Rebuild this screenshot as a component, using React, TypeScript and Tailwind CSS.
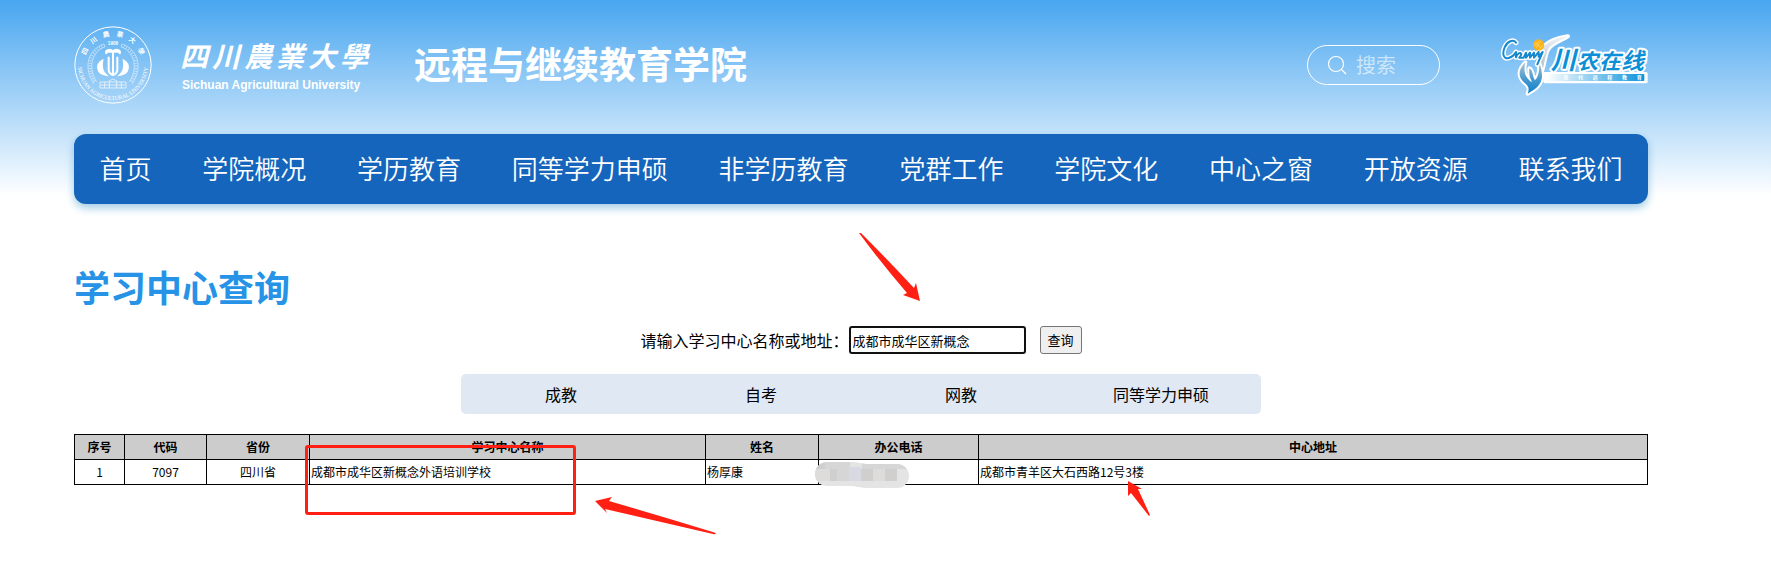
import { useState } from 'react'

const navItems = [
  '首页',
  '学院概况',
  '学历教育',
  '同等学力申硕',
  '非学历教育',
  '党群工作',
  '学院文化',
  '中心之窗',
  '开放资源',
  '联系我们'
]

const tabs = ['成教', '自考', '网教', '同等学力申硕']

const columns = [
  { title: '序号', width: 'w-[50px]' },
  { title: '代码', width: 'w-[82px]' },
  { title: '省份', width: 'w-[103px]' },
  { title: '学习中心名称', width: 'w-[396px]' },
  { title: '姓名', width: 'w-[113px]' },
  { title: '办公电话', width: 'w-[160px]' },
  { title: '中心地址', width: '' }
]

// 校徽外圈的字和各自的旋转角度
const ringChars = [
  { char: '四', angle: -64 },
  { char: '川', angle: -38 },
  { char: '農', angle: -13 },
  { char: '業', angle: 13 },
  { char: '大', angle: 38 },
  { char: '學', angle: 64 }
]

interface Center {
  id: number
  code: string
  province: string
  name: string
  contact: string
  address: string
}

const centers: Center[] = [
  {
    id: 1,
    code: '7097',
    province: '四川省',
    name: '成都市成华区新概念外语培训学校',
    contact: '杨厚康',
    address: '成都市青羊区大石西路12号3楼'
  }
]

function Emblem() {
  return (
    <svg className="size-[78px] shrink-0" viewBox="0 0 234 234" fill="none" stroke="#fff">
      <defs>
        <path id="ring-bottom" d="M15 92A105 105 0 1 0 219 92" />
      </defs>
      <circle cx="117" cy="117" r="114.500" strokeWidth="3" />
      <g
        fill="#fff"
        stroke="none"
        fontSize="20"
        fontWeight="700"
        textAnchor="middle"
        className="font-['Noto_Sans_CJK_TC',sans-serif]"
      >
        {ringChars.map(({ char, angle }) => (
          <text key={char} x="117" y="30" transform={`rotate(${angle} 117 117)`}>
            {char}
          </text>
        ))}
      </g>
      <text
        x="117"
        y="57"
        fill="#fff"
        stroke="none"
        fontSize="14"
        fontWeight="700"
        textAnchor="middle"
        className="font-['Liberation_Sans',sans-serif]"
      >
        1906
      </text>
      <text
        fill="#fff"
        stroke="none"
        fontSize="17"
        textAnchor="middle"
        className="font-['Liberation_Serif',serif]"
      >
        <textPath href="#ring-bottom" startOffset="50%">SICHUAN AGRICULTURAL UNIVERSITY</textPath>
      </text>
      <g strokeWidth="2" opacity=".75">
        <path d="M90 54C42 70 26 124 60 174M144 54c48 16 64 70 30 120" />
        <path d="M94 62C54 76 40 124 68 168M140 62c40 14 54 62 26 106" />
        <path d="M92 58C48 73 33 124 64 171M142 58c44 15 59 66 28 113" strokeWidth="8" strokeDasharray="2 6" />
      </g>
      <path d="M117 76v68M98 84c-8-12 10-16 19-8c9-8 27-4 19 8M94 77h46M104 92v38c0 9 5 15 13 17c8-2 13-8 13-17V92" strokeWidth="6" />
      <path d="M86 102c-22 12-20 42 12 46c-12-10-16-26-12-46zM148 102c22 12 20 42-12 46c12-10 16-26 12-46z" fill="#fff" strokeWidth="4" />
      <path d="M78 168h78v18H78zM92 168v18M106 168v18M128 168v18M142 168v18M104 166l13-7l13 7M80 177h74" strokeWidth="2" />
    </svg>
  )
}

function OnlineLogo() {
  return (
    <svg className="h-[62px] w-[148px] shrink-0" viewBox="60 42 444 186">
      <defs>
        <linearGradient id="bar" x1="0" x2="1">
          <stop offset="0" stopColor="#fff" />
          <stop offset="1" stopColor="#0b93dc" />
        </linearGradient>
        <linearGradient id="tail" x1="0" x2="0" y1="0" y2="1">
          <stop offset="0" stopColor="#b9c4cc" />
          <stop offset="0.500" stopColor="#4a9ccf" />
          <stop offset="1" stopColor="#0d7fc8" />
        </linearGradient>
        <linearGradient id="wing" x1="0" x2="0" y1="0" y2="1">
          <stop offset="0" stopColor="#f0f3f5" />
          <stop offset="1" stopColor="#9fb3c1" />
        </linearGradient>
      </defs>
      <rect x="190" y="156" width="313" height="34" rx="5" fill="#fff" />
      <rect x="200" y="162" width="293" height="21" rx="3" fill="url(#bar)" />
      <g stroke="#fff" strokeWidth="12" strokeLinejoin="round" paintOrder="stroke">
        <path d="M264 49c-38 6-68 16-78 40c-9 24-2 50-12 84c16-10 18-54 28-80c8-22 36-28 62-44z" fill="url(#wing)" />
        <path
          d="M136 127c-24 24-20 44-6 58c14 12 20 18 13 36c26-14 42-28 43-52c0-14-3-28-9-42c2 26-2 44-12 54c-9-14-5-30-17-36c-2 20 2 28 8 42c-16-12-28-26-20-60z"
          fill="url(#tail)"
        />
      </g>
      <g fill="none" strokeLinecap="round" strokeLinejoin="round">
        <path
          d="M108 68c-8-12-26-4-34 14c-10 24 0 36 12 32c12-4 18-10 22-18v16c4-12 12-16 16-10c0 4-4 8-6 11h13l7-15v15l12-15v15l12-15v15l14-17v14l12-14l-16 37"
          stroke="#fff"
          strokeWidth="15"
        />
        <path
          d="M108 68c-8-12-26-4-34 14c-10 24 0 36 12 32c12-4 18-10 22-18v16c4-12 12-16 16-10c0 4-4 8-6 11h13l7-15v15l12-15v15l12-15v15l14-17v14l12-14l-16 37"
          stroke="#1789cc"
          strokeWidth="6"
        />
      </g>
      <circle cx="176" cy="75" r="17" fill="#fcb116" />
      <path d="M164 68l18 14M168 84l14-20M162 77l16-14M175 91l15-17" stroke="#ffe08a" strokeWidth="2" />
      <g
        className="font-['Noto_Sans_CJK_SC',sans-serif]"
        fontWeight="700"
        fontStyle="italic"
        fill="#0b8fd6"
        stroke="#fff"
        strokeWidth="12"
        strokeLinejoin="round"
        paintOrder="stroke"
      >
        <text x="212" y="146" fontSize="76">川</text>
        <text x="290" y="146" fontSize="64">农</text>
        <text x="358" y="146" fontSize="64">在</text>
        <text x="424" y="146" fontSize="68">线</text>
      </g>
      <g className="font-['Noto_Sans_CJK_SC',sans-serif]" fontSize="15" fontWeight="700" fill="#fff">
        <text x="250" y="178">现</text>
        <text x="294" y="178">代</text>
        <text x="338" y="178">远</text>
        <text x="382" y="178">程</text>
        <text x="426" y="178">教</text>
        <text x="470" y="178">育</text>
      </g>
    </svg>
  )
}

function Header() {
  return (
    <header className="flex h-[134px] items-start justify-between pt-[26px]">
      <div className="flex h-[78px] items-center">
        <Emblem />
        <div className="ml-7 text-white">
          <div className="flex gap-1 font-['Noto_Sans_CJK_TC',sans-serif] text-[28px] leading-9 font-bold italic">
            {[...'四川農業大學'].map(char => (
              <span key={char}>{char}</span>
            ))}
          </div>
          <div className="mt-1 pl-[2px] font-['Liberation_Sans',sans-serif] text-[12px] leading-4 font-bold">
            Sichuan Agricultural University
          </div>
        </div>
        <div className="ml-[46px] pb-1 text-[37px] leading-[44px] font-bold text-white">远程与继续教育学院</div>
      </div>

      <div className="flex h-[78px] items-center gap-[60px]">
        <form
          className="flex h-10 w-[133px] items-center gap-[9px] rounded-full border border-white pl-[19px]"
          onSubmit={e => e.preventDefault()}
        >
          <svg className="size-5 shrink-0" viewBox="0 0 20 20" fill="none" stroke="#fff" strokeWidth="1.200">
            <circle cx="9" cy="9" r="7.500" />
            <path d="M14.500 14.500L19 19" />
          </svg>
          <input
            type="text"
            aria-label="搜索"
            placeholder="搜索"
            className="w-16 min-w-0 bg-transparent text-[20px] leading-7 text-white outline-none placeholder:text-white/60"
          />
        </form>
        <OnlineLogo />
      </div>
    </header>
  )
}

function CenterTable() {
  return (
    <div className="relative mt-5">
      <table className="w-full table-fixed border-collapse text-[12px] leading-4">
        <thead>
          <tr className="h-[25px] bg-[#ccc]">
            {columns.map(col => (
              <th key={col.title} className={`border border-black p-px font-bold ${col.width}`}>
                {col.title}
              </th>
            ))}
          </tr>
        </thead>
        <tbody>
          {centers.map(center => (
            <tr key={center.id} className="h-[25px]">
              <td className="border border-black p-px text-center">{center.id}</td>
              <td className="border border-black p-px text-center">{center.code}</td>
              <td className="border border-black p-px text-center">{center.province}</td>
              <td className="border border-black p-px">{center.name}</td>
              <td className="border border-black p-px">{center.contact}</td>
              <td className="border border-black p-px"></td>
              <td className="border border-black p-px">{center.address}</td>
            </tr>
          ))}
        </tbody>
      </table>

      {/* 打码的电话 */}
      <svg className="absolute top-7 left-[740px] h-7 w-24" viewBox="0 0 96 28">
        <defs>
          <clipPath id="blot">
            <path d="M13 0h24c8 0 10 2 18 2h28a12 12 0 0 1 0 24H55c-10 0-12-2-20-2H13a12 12 0 0 1 0-24z" />
          </clipPath>
        </defs>
        <g clipPath="url(#blot)">
          <path fill="#e4e4e4" d="M0 0h96v28H0z" />
          <path fill="#cfcfcf" d="M0 0h11v7H0zM16 7h7v12h-7zM47 7h12v12H47zM71 7h12v12H71z" />
          <path fill="#d6d6d6" d="M11 0h25v7H11zM23 7h12v12H23zM48 0h48v7H48z" />
          <path fill="#d9d9e3" d="M35 5h12v14H35z" />
          <path fill="#dddcdb" d="M59 7h12v12H59zM0 7h16v12H0z" />
        </g>
      </svg>

      <div className="pointer-events-none absolute top-[11px] left-[231px] h-[70px] w-[271px] rounded-[3px] border-3 border-[#ff2013]" />
      <svg className="absolute top-[62px] left-[520px] h-10 w-[124px]" viewBox="0 0 124 40" fill="#ff2013">
        <path d="M1 5L18 1L15 5Q70 21 122 37Q121 39 119 38L11 13L13 17Z" />
      </svg>
      <svg className="absolute top-[46px] left-[1053px] h-[38px] w-6" viewBox="0 0 24 38" fill="#ff2013">
        <path d="M1 1L15 9L11 9L23 35L22 36L4 13L1 16Z" />
      </svg>
    </div>
  )
}

export default function App() {
  const [keyword, setKeyword] = useState('成都市成华区新概念')

  return (
    <div className="min-h-screen bg-white bg-[linear-gradient(#48a6f0,#fff)] bg-[length:100%_196px] bg-no-repeat pr-[123px] pl-[74px] font-['Noto_Sans_CJK_SC',sans-serif] text-black">
      <Header />

      <nav className="flex h-[70px] items-center justify-around rounded-[12px] bg-[#1565bc] pb-[2px] text-[26px] leading-9 font-[350] whitespace-nowrap text-white shadow-[0_4px_8px_rgba(20,130,190,0.4)]">
        {navItems.map(item => (
          <a key={item} href="#">
            {item}
          </a>
        ))}
      </nav>

      <main>
        <h1 className="mt-[58px] text-[36px] leading-[48px] font-bold text-[#2693e6]">学习中心查询</h1>

        <form className="mt-4 flex justify-center" onSubmit={e => e.preventDefault()}>
          <div className="relative flex h-7 items-center">
            <label htmlFor="keyword" className="text-[16px] leading-6">
              请输入学习中心名称或地址：
            </label>
            <input
              id="keyword"
              type="text"
              value={keyword}
              onChange={e => setKeyword(e.target.value)}
              className="h-7 w-[177px] rounded-[3px] border-2 border-[#101010] bg-white px-[2px] text-[13px] leading-5 outline-none"
            />
            <button
              type="submit"
              className="ml-[14px] h-7 w-[42px] rounded-[3px] border border-[#767676] bg-[#efefef] text-[13px] leading-5"
            >
              查询
            </button>
            <svg
              className="absolute -top-[94px] left-[218px] h-[70px] w-[64px]"
              viewBox="0 0 64 70"
              fill="#ff2013"
            >
              <path d="M1 1L3 1Q30 28 56 56L58 51L62 69L45 63L49 61Q24 32 1 1Z" />
            </svg>
          </div>
        </form>

        <div className="mx-auto mt-5 grid h-10 max-w-[800px] grid-cols-4 rounded-[5px] bg-[#e0e8f4] text-[16px] leading-10">
          {tabs.map(tab => (
            <button key={tab} type="button">
              {tab}
            </button>
          ))}
        </div>

        <CenterTable />
      </main>
    </div>
  )
}
